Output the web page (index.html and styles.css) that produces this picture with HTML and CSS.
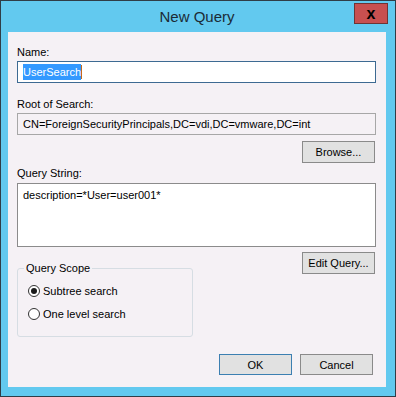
FILE: index.html
```html
<!DOCTYPE html>
<html lang="en">
<head>
  <meta charset="UTF-8">
  <title>New Query</title>
  <link rel="stylesheet" href="styles.css">
</head>
<body>

  <div class="window">
    <div class="titlebar">New Query</div>
    <button class="close-btn">x</button>

    <div class="client">
      <div class="label first">Name:</div>
      <div class="field focused"><span class="sel">UserSearch</span><span class="caret"></span></div>

      <div class="label">Root of Search:</div>
      <div class="field readonly">CN=ForeignSecurityPrincipals,DC=vdi,DC=vmware,DC=int</div>

      <button class="btn browse">Browse...</button>

      <div class="label query-label">Query String:</div>
      <div class="field area">description=*User=user001*</div>

      <div class="scope-row">
        <fieldset class="group">
          <legend>Query Scope</legend>
          <label class="radio-row"><input type="radio" name="scope" checked> Subtree search</label>
          <label class="radio-row"><input type="radio" name="scope"> One level search</label>
        </fieldset>
        <button class="btn">Edit Query...</button>
      </div>

      <div class="actions">
        <button class="btn default">OK</button>
        <button class="btn cancel">Cancel</button>
      </div>
    </div>
  </div>

</body>
</html>
```

FILE: styles.css
```css
body {
  margin: 0;
  font-family: "Liberation Sans", Arial, sans-serif;
  font-size: 11px;
  color: #000;
}
.window {
  position: relative;
  width: 396px;
  height: 397px;
  box-sizing: border-box;
  border: 1px solid #2f3d47;
  background: #62c9ef;
  padding: 0 9px 9px 7px;
  display: flex;
  flex-direction: column;
}
.titlebar {
  height: 31px;
  padding-top: 6px;
  box-sizing: border-box;
  text-align: center;
  font-size: 15px;
  line-height: 20px;
  color: #1b2b36;
}
.close-btn {
  position: absolute;
  top: 2px;
  right: 7px;
  width: 34px;
  height: 21px;
  padding: 0;
  background: #c75050;
  border: 1px solid #6e3434;
  color: #000;
  font-size: 16px;
  font-weight: bold;
  font-family: "Liberation Sans", Arial, sans-serif;
  line-height: 16px;
}
.client {
  flex: 1;
  background: #f5f1f5;
  padding: 13px 10px 0 9px;
  display: flex;
  flex-direction: column;
}
.label {
  line-height: 15px;
  margin-top: 14px;
}
.label.first {
  margin-top: 0;
}
.field {
  margin-top: 1px;
  height: 22px;
  box-sizing: border-box;
  padding: 0 5px;
  line-height: 20px;
  background: #fff;
  border: 1px solid #a9a9a9;
  white-space: nowrap;
}
.field.focused {
  border-color: #3d6a92;
}
.field.readonly {
  background: #f5f1f5;
  border-color: #a7a7a7;
}
.sel {
  background: #3399ff;
  color: #fff;
  padding: 2px 0;
}
.caret {
  display: inline-block;
  width: 1px;
  height: 14px;
  background: #c76a18;
  vertical-align: -3px;
}
.field.area {
  margin-top: 2px;
  height: 64px;
  line-height: 15px;
  padding-top: 4px;
  border-color: #8b8b8b;
}
.btn {
  width: 73px;
  height: 22px;
  padding: 0;
  background: #e1e1e1;
  border: 1px solid #8a8a8a;
  font-family: inherit;
  font-size: 11px;
  color: #000;
}
.browse {
  align-self: flex-end;
  margin-top: 6px;
  margin-right: 1px;
}
.query-label {
  margin-top: 3px;
}
.scope-row {
  display: flex;
  justify-content: space-between;
  align-items: flex-start;
  margin-top: 5px;
}
.scope-row .btn {
  margin-right: 1px;
}
.group {
  margin: 9px 0 0;
  width: 176px;
  box-sizing: border-box;
  padding: 0 0 11px 6px;
  border: 1px solid #d6dde3;
  border-radius: 3px;
}
.group legend {
  padding: 0 2px;
  line-height: 15px;
}
.radio-row {
  display: flex;
  align-items: center;
  height: 23px;
  margin-left: 4px;
}
.radio-row:first-of-type {
  margin-top: 3px;
}
.radio-row input {
  appearance: none;
  width: 12px;
  height: 12px;
  margin: 0 3px 0 0;
  border: 1px solid #333;
  border-radius: 50%;
  background: #fff;
  display: grid;
  place-content: center;
}
.radio-row input:checked::before {
  content: "";
  width: 6px;
  height: 6px;
  border-radius: 50%;
  background: #1a1a1a;
}
.actions {
  display: flex;
  justify-content: flex-end;
  gap: 8px;
  margin-top: 17px;
  margin-right: 3px;
}
.actions .btn {
  height: 21px;
}
.btn.default {
  border-color: #3c7fb1;
}
```
